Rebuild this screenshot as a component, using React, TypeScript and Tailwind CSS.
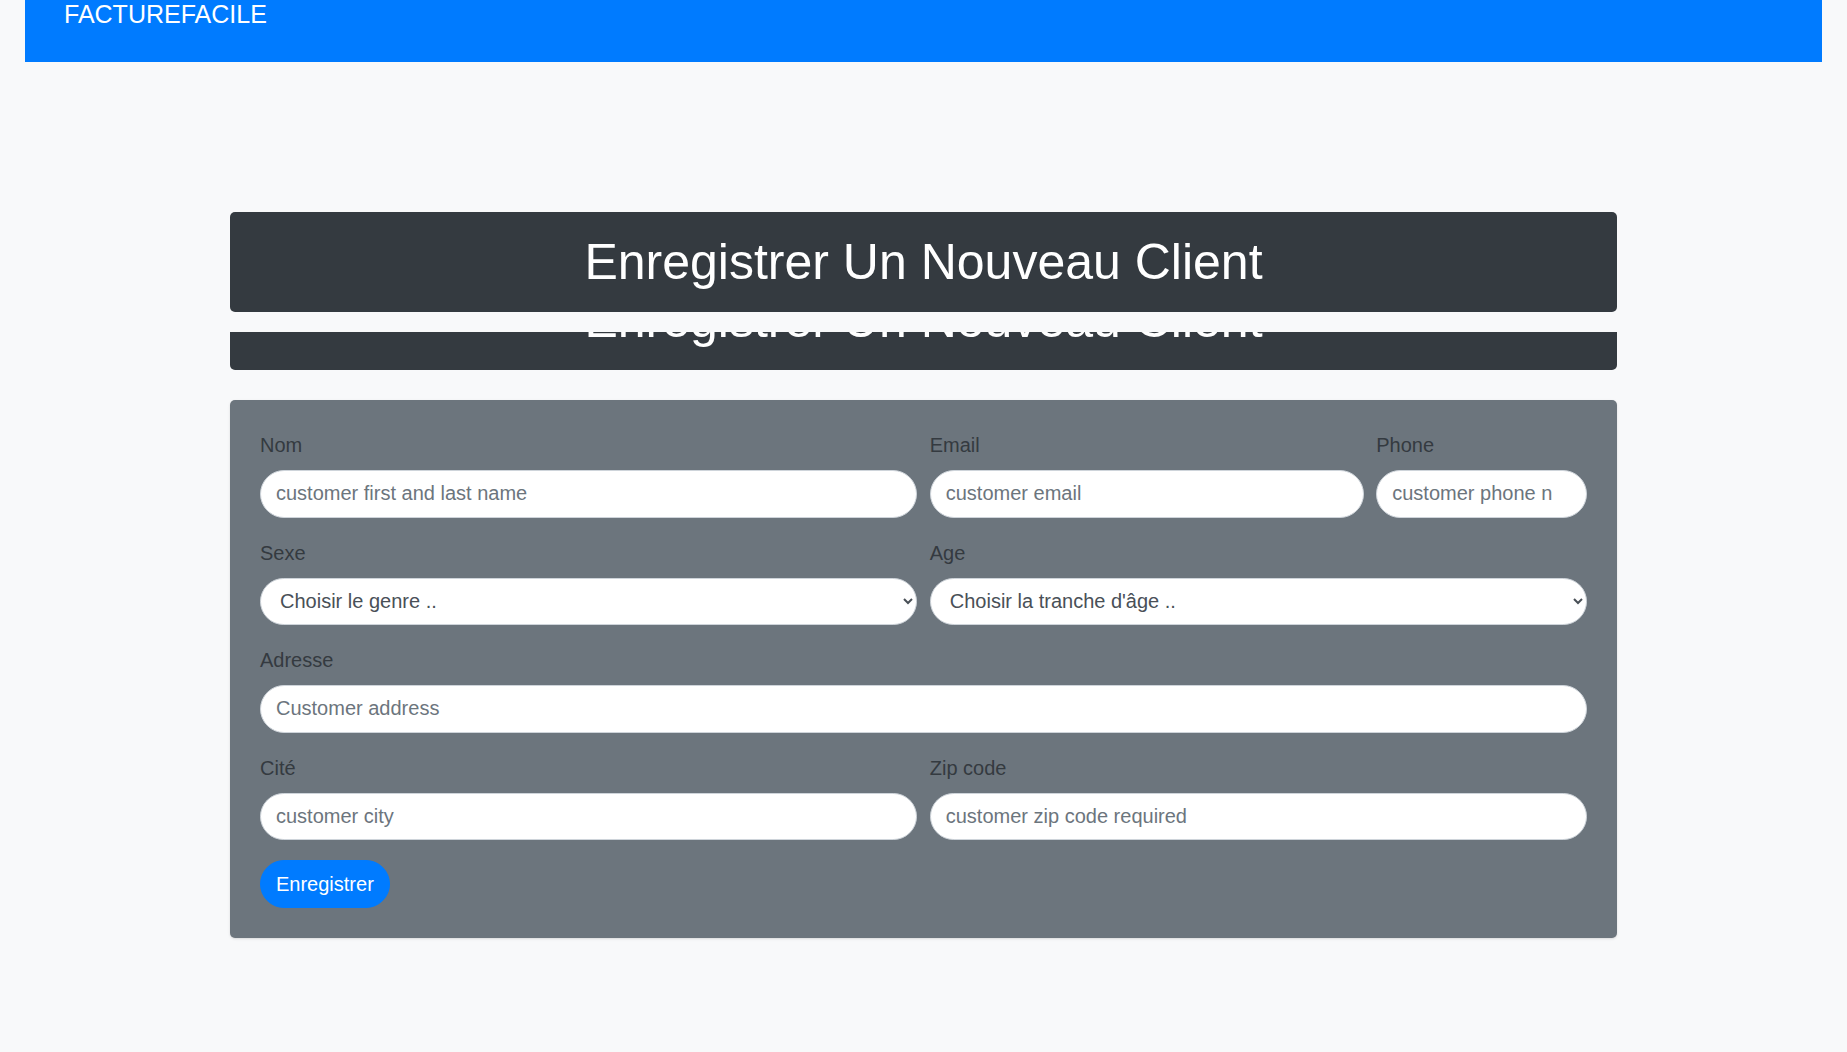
import React from "react";

const fieldLabel = "mb-[10px] block text-[20px] leading-[30px] text-[#343a40]";
const fieldInput =
    "block h-[47.5px] w-full rounded-full border border-[#ced4da] bg-white px-[15px] text-[20px] leading-[30px] text-[#495057] outline-none placeholder:text-[#6c757d]";

function Field({ label, placeholder, span }: { label: string; placeholder: string; span: string }) {
    return (
        <div className={`${span} mb-5`}>
            <label className={fieldLabel}>{label}</label>
            <input type="text" placeholder={placeholder} className={fieldInput} />
        </div>
    );
}

function SelectField({ label, options }: { label: string; options: string[] }) {
    return (
        <div className="col-span-6 mb-5">
            <label className={fieldLabel}>{label}</label>
            <select defaultValue={options[0]} className={fieldInput}>
                {options.map((o) => (
                    <option key={o} value={o}>
                        {o}
                    </option>
                ))}
            </select>
        </div>
    );
}

function Title() {
    return <h1 className="text-center text-[50px] leading-[60px] font-normal text-white">Enregistrer Un Nouveau Client</h1>;
}

export default function App() {
    return (
        <div className="min-h-screen bg-[#f8f9fa] font-['Liberation_Sans',Arial,sans-serif]">
            <nav className="mx-[25px] h-[62px] bg-[#007bff] pl-[39px]">
                <span className="block pt-[2px] text-[25px] leading-none text-white">FACTUREFACILE</span>
            </nav>

            <div className="mx-auto w-[1387px] pt-[150px] pb-10">
                <div className="rounded-[5px] bg-[#343a40] py-5">
                    <Title />
                </div>

                {/* scrolled copy underneath, mostly hidden */}
                <div className="mt-5 h-[38px] overflow-hidden rounded-b-[5px] bg-[#343a40]">
                    <div className="-mt-[62px] py-5">
                        <Title />
                    </div>
                </div>

                <form className="mt-[30px] rounded-[5px] bg-[#6c757d] p-[30px] shadow-sm">
                    <div className="grid grid-cols-12 gap-x-[12.5px]">
                        <Field span="col-span-6" label="Nom" placeholder="customer first and last name" />
                        <Field span="col-span-4" label="Email" placeholder="customer email" />
                        <Field span="col-span-2" label="Phone" placeholder="customer phone n" />

                        <SelectField label="Sexe" options={["Choisir le genre ..", "Homme", "Femme"]} />
                        <SelectField label="Age" options={["Choisir la tranche d'âge ..", "18 - 25", "26 - 40", "41 et plus"]} />

                        <Field span="col-span-12" label="Adresse" placeholder="Customer address" />

                        <Field span="col-span-6" label="Cité" placeholder="customer city" />
                        <Field span="col-span-6" label="Zip code" placeholder="customer zip code required" />
                    </div>
                    <button
                        type="button"
                        className="rounded-full border border-[#007bff] bg-[#007bff] px-[15px] py-[7.75px] text-[20px] leading-[30px] text-white"
                    >
                        Enregistrer
                    </button>
                </form>
            </div>
        </div>
    );
}
